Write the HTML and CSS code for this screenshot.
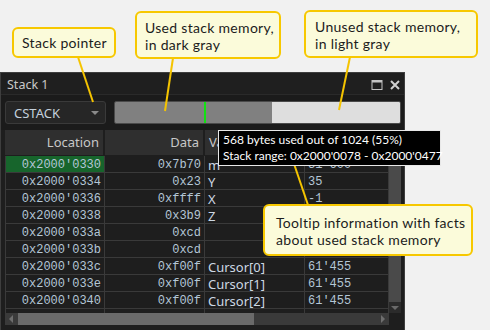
FILE: index.html
```html
<!DOCTYPE html>
<html lang="en">
<head>
  <meta charset="UTF-8">
  <title>Stack window</title>
  <link rel="stylesheet" href="styles.css">
</head>
<body>
  <div class="stage">
    <div class="panel">
      <div class="titlebar">
        <span class="title">Stack 1</span>
        <div class="win-icons">
          <svg width="12" height="11" viewBox="0 0 12 11"><rect x="1" y="1.5" width="10" height="9" fill="none" stroke="#c4c4c4" stroke-width="1"/><rect x="1" y="1" width="10" height="2.5" fill="#c4c4c4"/></svg>
          <svg width="10" height="10" viewBox="0 0 10 10"><path d="M1 1 L9 9 M9 1 L1 9" stroke="#d0d0d0" stroke-width="2"/></svg>
        </div>
      </div>
      <div class="toolbar">
        <div class="dropdown">
          <span>CSTACK</span>
          <span class="caret"></span>
        </div>
        <div class="usage-bar">
          <div class="used"><span class="sp-mark"></span></div>
          <div class="unused"></div>
        </div>
      </div>
      <div class="table">
        <div class="thead">
          <div class="th right">Location</div>
          <div class="th right">Data</div>
          <div class="th">Variable</div>
          <div class="th">Value</div>
        </div>
        <div class="body-wrap">
          <div class="tbody">
            <div class="row">
              <div class="td mono right current">0x2000'0330</div>
              <div class="td mono right">0x7b70</div>
              <div class="td name">m</div>
              <div class="td mono">31'600</div>
            </div>
            <div class="row">
              <div class="td mono right">0x2000'0334</div>
              <div class="td mono right">0x23</div>
              <div class="td name">Y</div>
              <div class="td mono">35</div>
            </div>
            <div class="row">
              <div class="td mono right">0x2000'0336</div>
              <div class="td mono right">0xffff</div>
              <div class="td name">X</div>
              <div class="td mono">-1</div>
            </div>
            <div class="row">
              <div class="td mono right">0x2000'0338</div>
              <div class="td mono right">0x3b9</div>
              <div class="td name">Z</div>
              <div class="td mono">953</div>
            </div>
            <div class="row">
              <div class="td mono right">0x2000'033a</div>
              <div class="td mono right">0xcd</div>
              <div class="td name"></div>
              <div class="td mono"></div>
            </div>
            <div class="row">
              <div class="td mono right">0x2000'033b</div>
              <div class="td mono right">0xcd</div>
              <div class="td name"></div>
              <div class="td mono"></div>
            </div>
            <div class="row">
              <div class="td mono right">0x2000'033c</div>
              <div class="td mono right">0xf00f</div>
              <div class="td name">Cursor[0]</div>
              <div class="td mono">61'455</div>
            </div>
            <div class="row">
              <div class="td mono right">0x2000'033e</div>
              <div class="td mono right">0xf00f</div>
              <div class="td name">Cursor[1]</div>
              <div class="td mono">61'455</div>
            </div>
            <div class="row">
              <div class="td mono right">0x2000'0340</div>
              <div class="td mono right">0xf00f</div>
              <div class="td name">Cursor[2]</div>
              <div class="td mono">61'455</div>
            </div>
            <div class="row">
              <div class="td"></div>
              <div class="td"></div>
              <div class="td"></div>
              <div class="td"></div>
            </div>
          </div>
          <div class="vscroll">
            <div class="vthumb"></div>
            <span class="arrow-down"></span>
          </div>
        </div>
        <div class="hscroll">
          <span class="arrow-left"></span>
          <div class="htrack"><div class="hthumb"></div></div>
          <span class="arrow-right"></span>
        </div>
      </div>
    </div>

    <svg class="leaders" width="490" height="330" viewBox="0 0 490 330">
      <line x1="78" y1="57" x2="93" y2="102"/>
      <line x1="173" y1="58" x2="165" y2="111"/>
      <line x1="350" y1="57" x2="339" y2="110"/>
      <line x1="291" y1="155" x2="308" y2="205"/>
    </svg>

    <div class="tooltip">
      <div>568 bytes used out of 1024 (55%)</div>
      <div>Stack range: 0x2000'0078 - 0x2000'0477</div>
    </div>

    <div class="callout c-pointer">Stack pointer</div>
    <div class="callout c-used">Used stack memory,<br>in dark gray</div>
    <div class="callout c-unused">Unused stack memory,<br>in light gray</div>
    <div class="callout c-tip">Tooltip information with facts<br>about used stack memory</div>
  </div>
</body>
</html>
```

FILE: styles.css
```css
body {
  margin: 0;
  background-color: #f1f1f1;
  font-family: "Noto Sans", "Open Sans", sans-serif;
}

.stage {
  position: relative;
  width: 490px;
  height: 330px;
  overflow: hidden;
}

/* ---- dark tool window ---- */

.panel {
  margin-top: 72px;
  width: 405px;
  height: 258px;
  box-sizing: border-box;
  background-color: #1e1e1e;
  border: 1px solid #3e3e3e;
  border-bottom: none;
  display: flex;
  flex-direction: column;
}

.titlebar {
  height: 19px;
  display: flex;
  align-items: center;
  justify-content: space-between;
  padding: 2px 4px 0 6px;
  background-color: #1f1f1f;
  border-bottom: 1px solid #2a2a2a;
  box-sizing: content-box;
}

.title {
  color: #c8c8c8;
  font-size: 12.5px;
}

.win-icons {
  display: flex;
  align-items: center;
  gap: 7px;
}

.toolbar {
  display: flex;
  align-items: center;
  gap: 8px;
  padding: 6px 3px 6px 4px;
  background-color: #1b1b1b;
}

.dropdown {
  width: 101px;
  height: 23px;
  box-sizing: border-box;
  border: 1px solid #3a3a3a;
  border-radius: 3px;
  background-color: #262626;
  display: flex;
  align-items: center;
  justify-content: space-between;
  padding: 0 6px 0 8px;
  color: #c4d0dc;
  font-size: 13px;
}

.caret {
  width: 0;
  height: 0;
  border-left: 4px solid transparent;
  border-right: 4px solid transparent;
  border-top: 4px solid #8a8a8a;
}

.usage-bar {
  flex: 1;
  height: 23px;
  display: flex;
  border: 1px solid #4a4a4a;
  border-radius: 2px;
  overflow: hidden;
  box-sizing: border-box;
}

.used {
  width: 157px;
  background-color: #808080;
  position: relative;
}

.sp-mark {
  position: absolute;
  left: 89px;
  top: 0;
  bottom: 0;
  width: 2px;
  background-color: #12e212;
}

.unused {
  flex: 1;
  background-color: #dedede;
}

/* ---- table ---- */

.table {
  flex: 1;
  margin-left: 4px;
  margin-right: 3px;
  display: flex;
  flex-direction: column;
  min-height: 0;
}

.thead {
  display: grid;
  grid-template-columns: 100px 100px 100px 1fr;
  height: 26px;
  flex-shrink: 0;
}

.th {
  background-color: #2f2f2f;
  border-right: 2px solid #1e1e1e;
  border-bottom: 1px solid #1e1e1e;
  color: #c8c8c8;
  font-size: 13px;
  line-height: 25px;
  padding: 0 4px;
}

.right {
  text-align: right;
}

.body-wrap {
  height: 157px;
  flex-shrink: 0;
  display: flex;
  overflow: hidden;
  border-left: 1px solid #3a3a3a;
}

.tbody {
  flex: 1;
}

.row {
  display: grid;
  grid-template-columns: 99px 100px 100px 1fr;
  height: 17px;
}

.td {
  box-sizing: border-box;
  height: 17px;
  border-right: 1px solid #3a3a3a;
  border-bottom: 1px solid #3a3a3a;
  padding: 1px 3px 0;
  line-height: 16px;
  white-space: nowrap;
  overflow: hidden;
  color: #b4c6d6;
}

.mono {
  font-family: "Liberation Mono", "DejaVu Sans Mono", monospace;
  font-size: 12px;
}

.name {
  font-size: 13px;
  color: #cdd8e4;
}

.td.current {
  background-color: #17652c;
}

.vscroll {
  width: 12px;
  background-color: #2b2b2b;
  display: flex;
  flex-direction: column;
  align-items: center;
}

.vthumb {
  width: 12px;
  height: 146px;
  background-color: #4a4a4a;
}

.arrow-down {
  margin-top: 4px;
  border-left: 4px solid transparent;
  border-right: 4px solid transparent;
  border-top: 4px solid #6a6a6a;
}

.hscroll {
  height: 12px;
  flex-shrink: 0;
  display: flex;
  align-items: center;
  background-color: #3a3a3a;
  margin-right: 12px;
}

.arrow-left {
  margin: 0 5px 0 4px;
  border-top: 4px solid transparent;
  border-bottom: 4px solid transparent;
  border-right: 4px solid #6e6e6e;
}

.htrack {
  flex: 1;
  height: 12px;
  background-color: #3a3a3a;
}

.hthumb {
  width: 236px;
  height: 12px;
  background-color: #6a6a6a;
}

.arrow-right {
  margin: 0 4px 0 5px;
  border-top: 4px solid transparent;
  border-bottom: 4px solid transparent;
  border-left: 4px solid #6e6e6e;
}

/* ---- overlays ---- */

.leaders {
  position: absolute;
  left: 0;
  top: 0;
}

.leaders line {
  stroke: #f5c400;
  stroke-width: 2;
}

.tooltip {
  position: absolute;
  left: 218px;
  top: 130px;
  width: 223px;
  height: 36px;
  box-sizing: border-box;
  background-color: #000;
  border: 1px solid #e8e8e8;
  padding: 1px 4px;
  color: #fff;
  font-family: Lato, "Noto Sans", sans-serif;
  font-size: 12px;
  line-height: 16px;
  white-space: nowrap;
}

.callout {
  position: absolute;
  box-sizing: border-box;
  background-color: #fbfbda;
  border: 2px solid #f7c800;
  border-radius: 6px;
  color: #1c1c1c;
  font-family: Lato, "Open Sans", sans-serif;
  font-size: 14px;
  line-height: 17px;
  letter-spacing: 0.3px;
  white-space: nowrap;
}

.c-pointer {
  left: 12px;
  top: 27px;
  width: 104px;
  height: 31px;
  padding: 5px 0 0 8px;
}

.c-used {
  left: 135px;
  top: 11px;
  width: 146px;
  height: 48px;
  padding: 6px 0 0 8px;
}

.c-unused {
  left: 304px;
  top: 10px;
  width: 174px;
  height: 48px;
  padding: 6px 0 0 9px;
}

.c-tip {
  left: 263px;
  top: 204px;
  width: 210px;
  height: 52px;
  padding: 8px 0 0 11px;
}
```
